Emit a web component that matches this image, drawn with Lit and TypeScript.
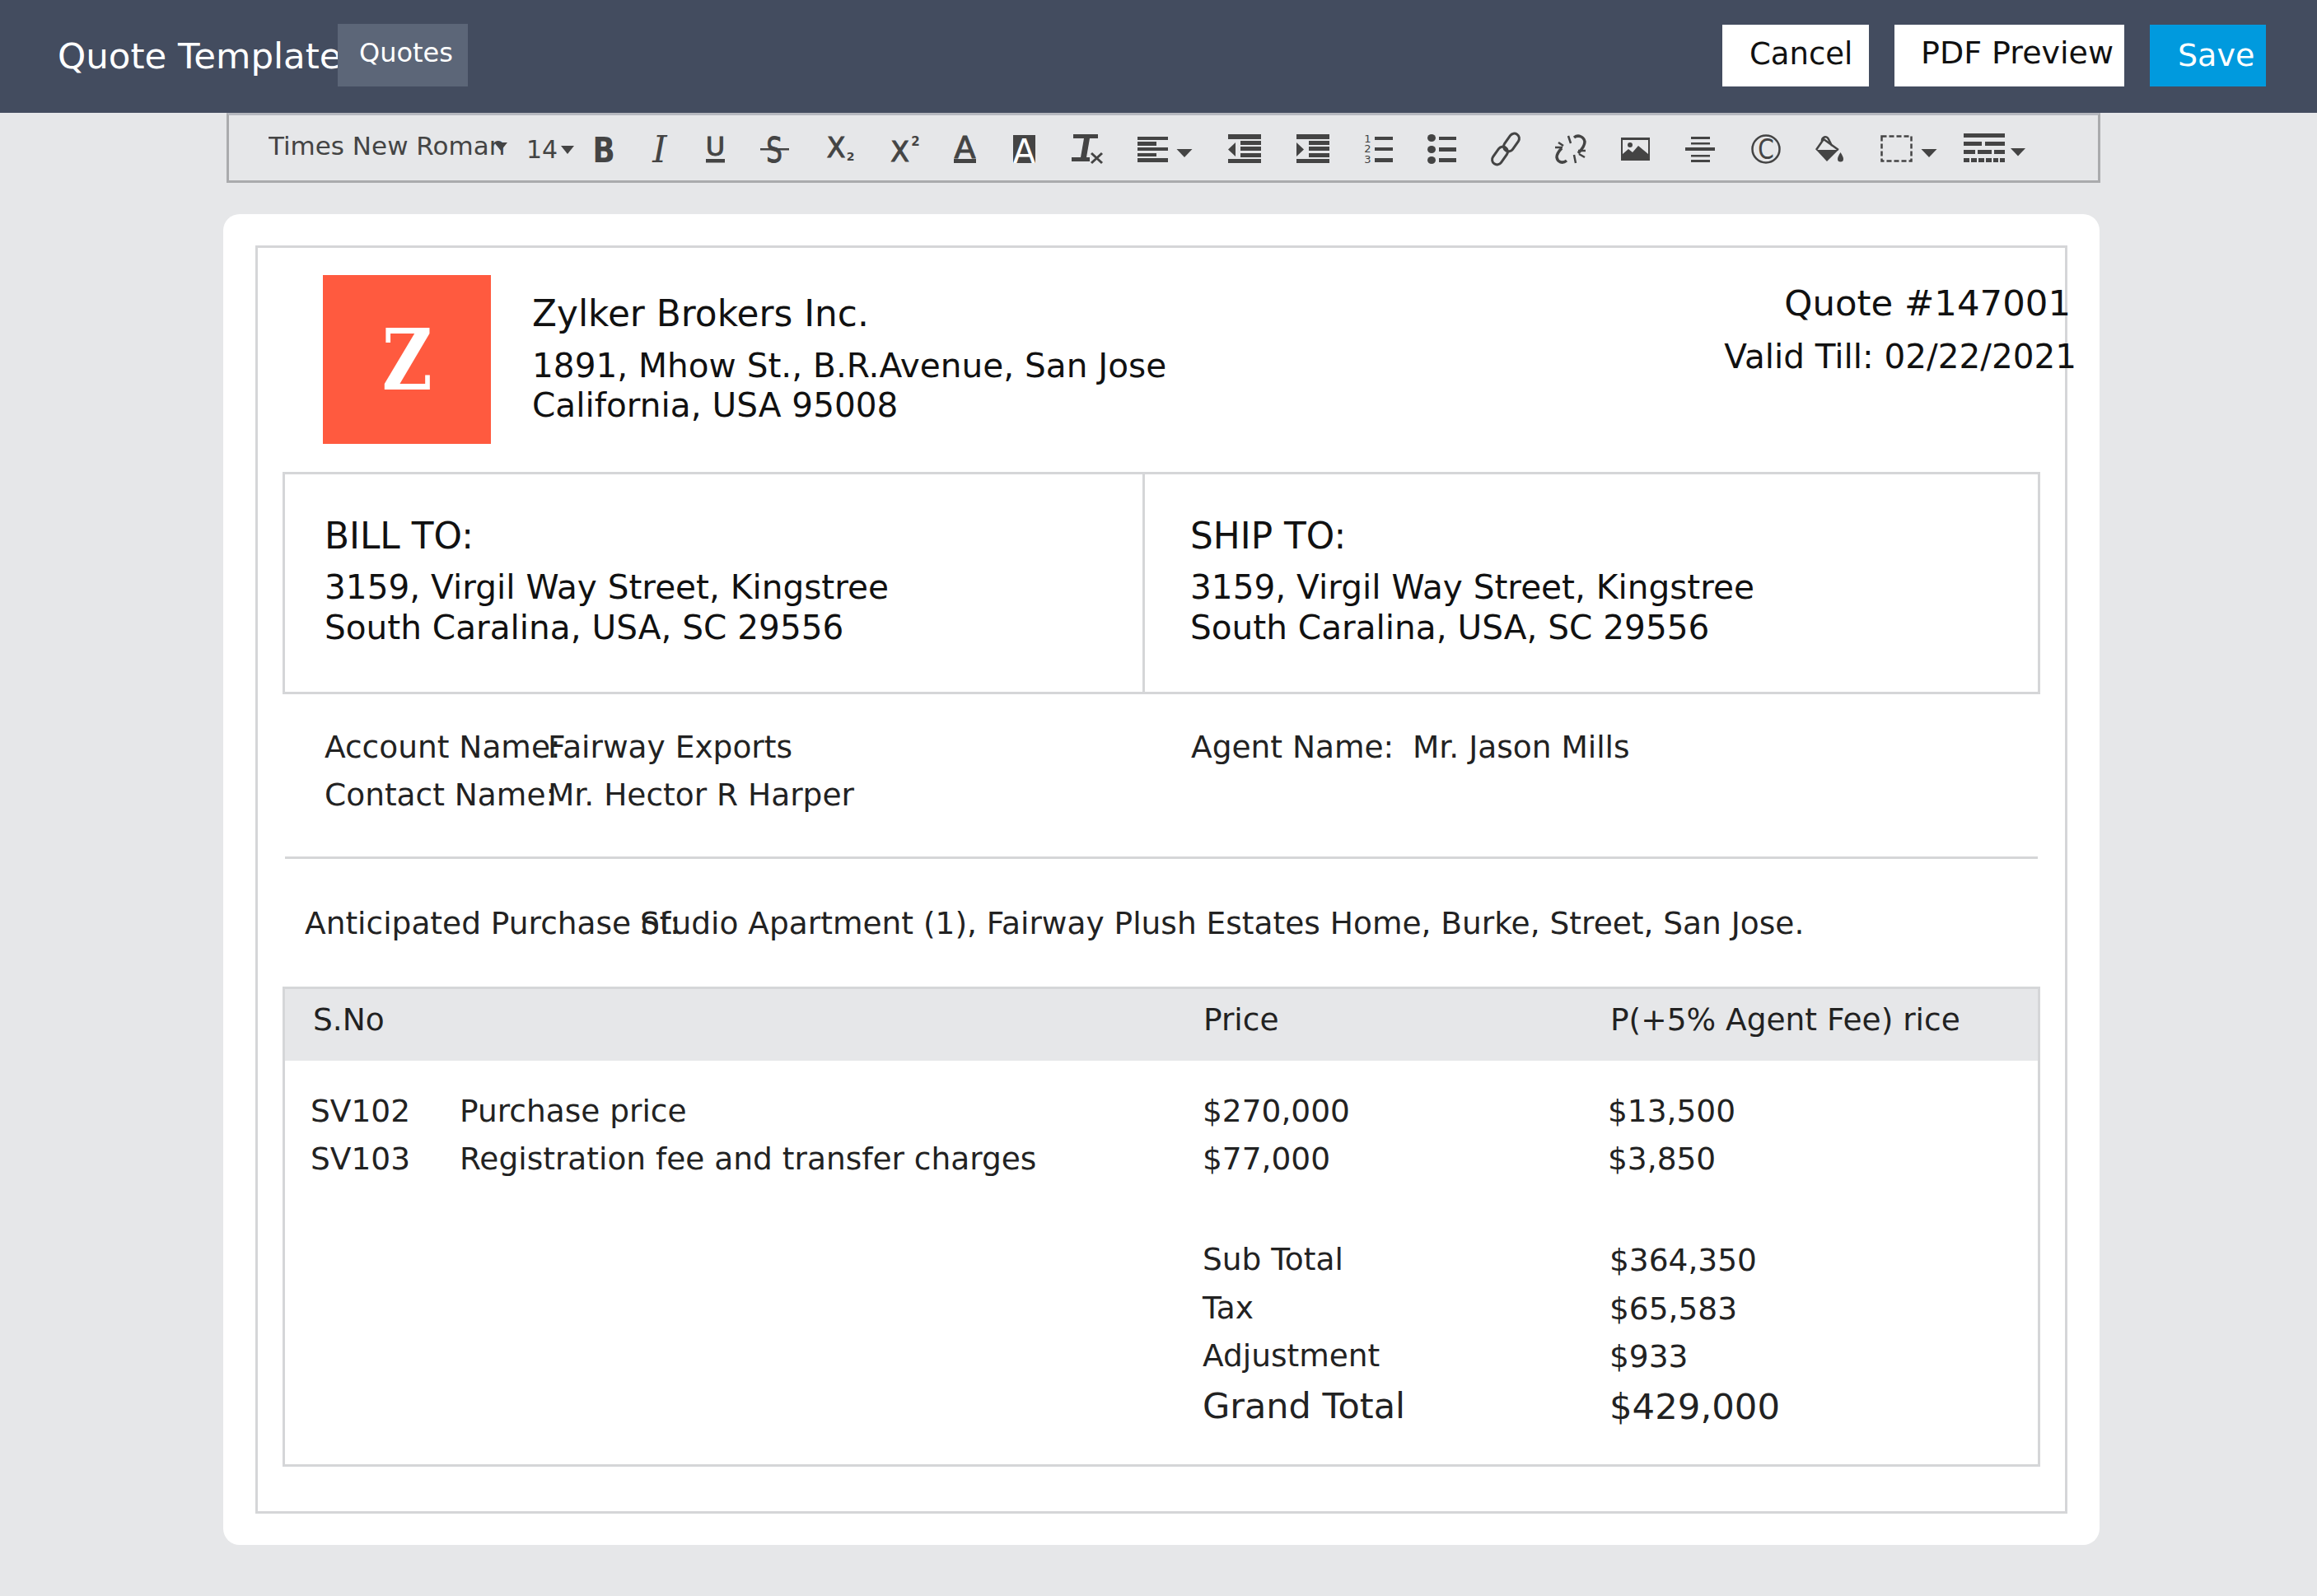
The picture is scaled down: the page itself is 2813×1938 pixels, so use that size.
import { LitElement, html, css, svg } from "lit";
import { customElement } from "lit/decorators.js";

const D = "#444";
const caret = svg`<path d="M10.500 20h19l-9.500 10z" fill="${D}"/>`;
type Tool = { cx: number; name: string; g: unknown };
const tools: Tool[] = [
  { cx: 733, name: "Bold", g: svg`<text transform="translate(20 36) scale(.85 1)" text-anchor="middle" class="gb" font-size="42">B</text>` },
  { cx: 801, name: "Italic", g: svg`<text x="20" y="36" text-anchor="middle" class="gi" font-size="44">I</text>` },
  { cx: 868, name: "Underline", g: svg`<text x="20.500" y="28" text-anchor="middle" class="gs" font-size="32">U</text><rect x="9" y="32" width="23" height="4.500" fill="${D}"/>` },
  { cx: 940, name: "Strike", g: svg`<text transform="translate(20 36) scale(.72 1)" text-anchor="middle" class="gs" font-size="43">S</text><rect x="3" y="19" width="35" height="2.500" fill="${D}"/>` },
  { cx: 1019, name: "Subscript", g: svg`<text x="16" y="30" text-anchor="middle" class="gs" font-size="33">X</text><text x="33.500" y="34" text-anchor="middle" class="gb" font-size="14">2</text>` },
  { cx: 1098, name: "Superscript", g: svg`<text x="14.500" y="35" text-anchor="middle" class="gs" font-size="33">X</text><text x="33.500" y="16" text-anchor="middle" class="gb" font-size="15">2</text>` },
  { cx: 1171, name: "Text color", g: svg`<text x="20.500" y="31" text-anchor="middle" class="gs" font-size="38">A</text><rect x="7" y="32" width="27" height="5" fill="${D}"/>` },
  { cx: 1243, name: "Highlight", g: svg`<rect x="7" y="3" width="27" height="34" fill="${D}"/><text x="20.500" y="37" text-anchor="middle" class="gw" font-size="40">A</text>` },
  { cx: 1319, name: "Clear", g: svg`<rect x="4" y="2" width="30" height="5" fill="${D}"/><path d="M17 7h7l-4 23h-7z" fill="${D}"/><rect x="2" y="30" width="22" height="5" fill="${D}"/><path d="M26 25l13 12M39 25L26 37" stroke="${D}" stroke-width="3" fill="none"/>` },
  { cx: 1399, name: "Align", g: svg`<path d="M2 5h37v4H2zM2 11h23v5H2zM2 18h37v4H2zM2 25h23v4H2zM2 31h37v5H2z" fill="${D}"/>` },
  { cx: 1438, name: "Align caret", g: caret },
  { cx: 1511, name: "Outdent", g: svg`<path d="M0 2h40v6H0zM15 10h25v5H15zM15 17h25v5H15zM15 25h25v5H15zM0 32h40v5H0zM0 20.500l9-8.500v17z" fill="${D}"/>` },
  { cx: 1594, name: "Indent", g: svg`<path d="M0 2h40v6H0zM15 10h25v5H15zM15 17h25v5H15zM15 25h25v5H15zM0 32h40v5H0zM9 20.500L0 12v17z" fill="${D}"/>` },
  { cx: 1674, name: "Ordered list", g: svg`<path d="M15 5h22v4H15zM15 18h22v4H15zM15 31h22v5H15z" fill="${D}"/><text x="6.500" y="12" text-anchor="middle" class="g" font-size="13">1</text><text x="6.500" y="24" text-anchor="middle" class="g" font-size="13">2</text><text x="6.500" y="37" text-anchor="middle" class="g" font-size="13">3</text>` },
  { cx: 1751, name: "Bullet list", g: svg`<path d="M16 5h21v4H16zM16 18h21v5H16zM16 31h21v5H16z" fill="${D}"/><ellipse cx="7" cy="6.500" rx="5" ry="4.500" fill="${D}"/><ellipse cx="7" cy="20.500" rx="5" ry="4.500" fill="${D}"/><ellipse cx="7" cy="33.500" rx="5" ry="4.500" fill="${D}"/>` },
  { cx: 1828, name: "Link", g: svg`<g fill="none" stroke="${D}" stroke-width="3"><rect x="-6" y="-12" width="12" height="24" rx="6" transform="translate(27 12) rotate(35)"/><rect x="-6" y="-12" width="12" height="24" rx="6" transform="translate(13 28) rotate(35)"/></g>` },
  { cx: 1907, name: "Unlink", g: svg`<g fill="none" stroke="${D}" stroke-width="3.500"><path d="M24 6c5-4 12-1 13 5 0 4-3 9-8 14"/><path d="M15 34c-5 4-11 2-12-4 0-4 2-7 6-11"/><path d="M17 4l3 9M5 12l6 4M1 18h9M24 27l2 10M30 26l7 4M29 22h9" stroke-width="2.500"/></g>` },
  { cx: 1985, name: "Image", g: svg`<path fill-rule="evenodd" d="M3 6h35v28H3zM5 9v17l7-6 5 4 7-8 12 10V9z" fill="${D}"/><circle cx="14" cy="15" r="3" fill="${D}"/>` },
  { cx: 2064, name: "Horizontal rule", g: svg`<path d="M9 5h23v3H9zM9 12h23v2.500H9zM2 18h36v4H2zM9 27h23v2.500H9zM9 33h23v3H9z" fill="${D}"/>` },
  { cx: 2144, name: "Copyright", g: svg`<circle cx="20" cy="20" r="16.500" fill="none" stroke="${D}" stroke-width="2.500"/><text transform="translate(20 32) scale(.85 1)" text-anchor="middle" class="g" font-size="33">C</text>` },
  { cx: 2221, name: "Fill", g: svg`<path d="M4 21h27L17 35z" fill="${D}"/><path d="M4 21l9-13 18 13M11 12c-1-7 6-9 8-4l4 8" fill="none" stroke="${D}" stroke-width="2.500"/><path d="M33.500 24c2 3 3.500 6 3.500 8a3.500 3.500 0 0 1-7 0c0-2 1.500-5 3.500-8z" fill="${D}"/>` },
  { cx: 2303, name: "Border", g: svg`<rect x="1.500" y="4.500" width="36" height="30" fill="none" stroke="${D}" stroke-width="2.500" stroke-dasharray="6 3"/>` },
  { cx: 2342, name: "Border caret", g: caret },
  { cx: 2409, name: "Table", g: svg`<path d="M-5 1h50v5H-5zM-5 11h22v5H-5zM21 11h24v5H21zM-5 21h14v5H-5zM12 21h17v5H12zM32 21h13v5H32zM-5 31h7v5h-7zM4 31h7v5H4zM13 31h7v5h-7zM22 31h7v5h-7zM31 31h6v5h-6zM39 31h6v5h-6z" fill="${D}"/>` },
  { cx: 2450, name: "Table caret", g: svg`<path d="M11 19h18l-9 9.500z" fill="${D}"/>` },
];

@customElement("app-root")
export class AppRoot extends LitElement {
  static styles = css`
    :host { display: block; width: 2813px; height: 1938px; overflow: hidden; background: #e6e7e9;
      font-family: "DejaVu Sans", sans-serif; color: #222; }
    * { box-sizing: border-box; }
    .top { height: 137px; background: #434c5f; display: flex; align-items: center; padding-left: 70px; padding-right: 62px; }
    .title { font-size: 43.500px; color: #fff; width: 340px; white-space: nowrap; margin-top: -1px; }
    .chip { width: 158px; height: 76px; margin-top: -3px; background: #5c6678; color: #fff; font-size: 32px;
      line-height: 70px; padding-left: 26px; }
    .btns { margin-left: auto; display: flex; gap: 31px; height: 75px; margin-top: -3px; }
    .btn { background: #fff; color: #111; font-size: 38px; display: flex; align-items: center; line-height: 1; }
    .cancel { width: 178px; padding-left: 33px; padding-bottom: 4px; font-size: 37px; }
    .pdf { width: 279px; padding-left: 32px; padding-bottom: 7px; font-size: 38px; }
    .save { width: 141px; padding-left: 34px; background: #009ade; color: #fff; }
    .tb { margin-left: 275px; width: 2275px; height: 85px; border: 3px solid #aaabad; border-top-color: #b6b8bf;
      display: flex; align-items: center; color: #444; }
    .font { width: 290px; margin-left: 48px; font-size: 31px; white-space: nowrap; overflow: hidden; position: relative; margin-top: -6px; flex: none; }
    .size { font-size: 30px; margin-left: 23px; flex: none; width: 38px; margin-top: 4px; }
    .fc { position: absolute; right: 0; top: 14px; border: 8px solid transparent; border-top: 10px solid #444; border-bottom: 0; }
    .sc { flex: none; width: 0; height: 0; border: 8px solid transparent; border-top: 10px solid #444; border-bottom: 0; margin-left: 4px; margin-top: 4px; }
    svg.ic { flex: none; width: 40px; height: 40px; margin-right: 4px; margin-top: 3px; overflow: visible; }
    .g, .gb, .gi, .gs { fill: #444; font-family: "DejaVu Sans", sans-serif; }
    .gs { stroke: #444; stroke-width: 1; }
    .gw { fill: #fff; font-family: "DejaVu Sans", sans-serif; }
    .gb { font-weight: 700; }
    .gi { font-family: "DejaVu Serif", serif; font-style: italic; }
    .paper { margin: 38px 0 0 271px; width: 2278px; height: 1616px; background: #fff; border-radius: 20px; padding: 38px 39px; }
    .frame { height: 1540px; border: 3px solid #d5d6d8; padding: 30px 30px 0; }
    .hd { display: flex; height: 242px; padding: 3px 0 0 49px; color: #111; }
    .logo { width: 204px; height: 205px; background: #ff5a3f; color: #fff; display: flex; align-items: center; justify-content: center; }
    .z { font-family: "DejaVu Serif", serif; font-weight: 700; font-size: 102px; transform: scaleX(.82); line-height: 1; }
    .co { margin-left: 50px; font-size: 40.600px; line-height: 48px; padding-top: 22px; }
    .co h1 { font-weight: 400; font-size: 43.800px; margin: 0 0 14px; line-height: 50px; }
    .q { margin-left: auto; margin-right: -44px; text-align: right; font-size: 40.500px; padding-top: 9px; white-space: nowrap; }
    .q1 { font-size: 43.400px; line-height: 50px; padding-right: 7px; margin-bottom: 15px; }
    .q2 { line-height: 50px; }
    .bill { display: grid; grid-template-columns: 1041px 1fr; height: 270px; border: 3px solid #d5d6d8; color: #111; }
    .bc { padding: 50px 0 0 48px; font-size: 40.600px; line-height: 48.500px; }
    .bc + .bc { border-left: 3px solid #d5d6d8; padding-left: 55px; }
    .bc h2 { font-weight: 400; font-size: 43.800px; line-height: 50px; margin: 0 0 13px; }
    .meta { display: grid; grid-template-columns: 1052px 1fr; height: 200px; font-size: 37.500px; line-height: 57.500px; padding: 36px 0 0 48px; margin: 0 3px; border-bottom: 3px solid #d5d6d8; }
    .kv { display: flex; white-space: nowrap; }
    .k { width: 271px; flex: none; }
    .ag { width: 269px; flex: none; }
    .ant { display: flex; height: 155px; font-size: 37.500px; align-items: center; padding-left: 27px; white-space: nowrap; }
    .ant .k { width: 407px; }
    .tbl { height: 583px; border: 3px solid #d5d6d8; }
    .th { display: grid; grid-template-columns: 1081px 494px 1fr; height: 87px; background: #e6e7e9; font-size: 37.500px; line-height: 75px; padding-left: 34px; }
    .rows { padding: 33px 0 0 31px; font-size: 37.500px; line-height: 57.500px; }
    .r { display: grid; grid-template-columns: 181px 902px 492px 1fr; white-space: nowrap; }
    .tot { margin-top: 65px; }
    .tot .r { grid-template-columns: 181px 902px 494px 1fr; }
    .tot .r span:last-child { padding-top: 1px; }
    .grand { font-size: 43.400px; line-height: 60px; }
    .grand span:nth-child(3) { font-size: 43px; }
  `;

  private bar() {
    let end = 697;
    return tools.map((t) => {
      const left = t.cx - 20 - end;
      end = t.cx + 24;
      return html`<svg class="ic" viewBox="0 0 40 40" role="img" aria-label=${t.name} style="margin-left:${left}px">${t.g}</svg>`;
    });
  }

  render() {
    return html`
      <div class="top">
        <div class="title">Quote Template</div>
        <div class="chip">Quotes</div>
        <div class="btns">
          <div class="btn cancel">Cancel</div>
          <div class="btn pdf">PDF Preview</div>
          <div class="btn save">Save</div>
        </div>
      </div>
      <div class="tb">
        <div class="font">Times New Roman<i class="fc"></i></div>
        <div class="size">14</div><i class="sc"></i>
        ${this.bar()}
      </div>
      <div class="paper"><div class="frame">
        <div class="hd">
          <div class="logo"><span class="z">Z</span></div>
          <div class="co"><h1>Zylker Brokers Inc.</h1>1891, Mhow St., B.R.Avenue, San Jose<br />California, USA 95008</div>
          <div class="q"><div class="q1">Quote #147001</div><div class="q2">Valid Till: 02/22/2021</div></div>
        </div>
        <div class="bill">
          <div class="bc"><h2>BILL TO:</h2>3159, Virgil Way Street, Kingstree<br />South Caralina, USA, SC 29556</div>
          <div class="bc"><h2>SHIP TO:</h2>3159, Virgil Way Street, Kingstree<br />South Caralina, USA, SC 29556</div>
        </div>
        <div class="meta">
          <div>
            <div class="kv"><span class="k">Account Name:</span><span>Fairway Exports</span></div>
            <div class="kv"><span class="k">Contact Name:</span><span>Mr. Hector R Harper</span></div>
          </div>
          <div class="kv"><span class="ag">Agent Name:</span><span>Mr. Jason Mills</span></div>
        </div>
        <div class="ant"><span class="k">Anticipated Purchase of:</span><span>Studio Apartment (1), Fairway Plush Estates Home, Burke, Street, San Jose.</span></div>
        <div class="tbl">
          <div class="th"><span>S.No</span><span>Price</span><span>P(+5% Agent Fee) rice</span></div>
          <div class="rows">
            <div class="r"><span>SV102</span><span>Purchase price</span><span>$270,000</span><span>$13,500</span></div>
            <div class="r"><span>SV103</span><span>Registration fee and transfer charges</span><span>$77,000</span><span>$3,850</span></div>
            <div class="tot">
              <div class="r"><span></span><span></span><span>Sub Total</span><span>$364,350</span></div>
              <div class="r"><span></span><span></span><span>Tax</span><span>$65,583</span></div>
              <div class="r"><span></span><span></span><span>Adjustment</span><span>$933</span></div>
              <div class="r grand"><span></span><span></span><span>Grand Total</span><span>$429,000</span></div>
            </div>
          </div>
        </div>
      </div></div>
    `;
  }
}
